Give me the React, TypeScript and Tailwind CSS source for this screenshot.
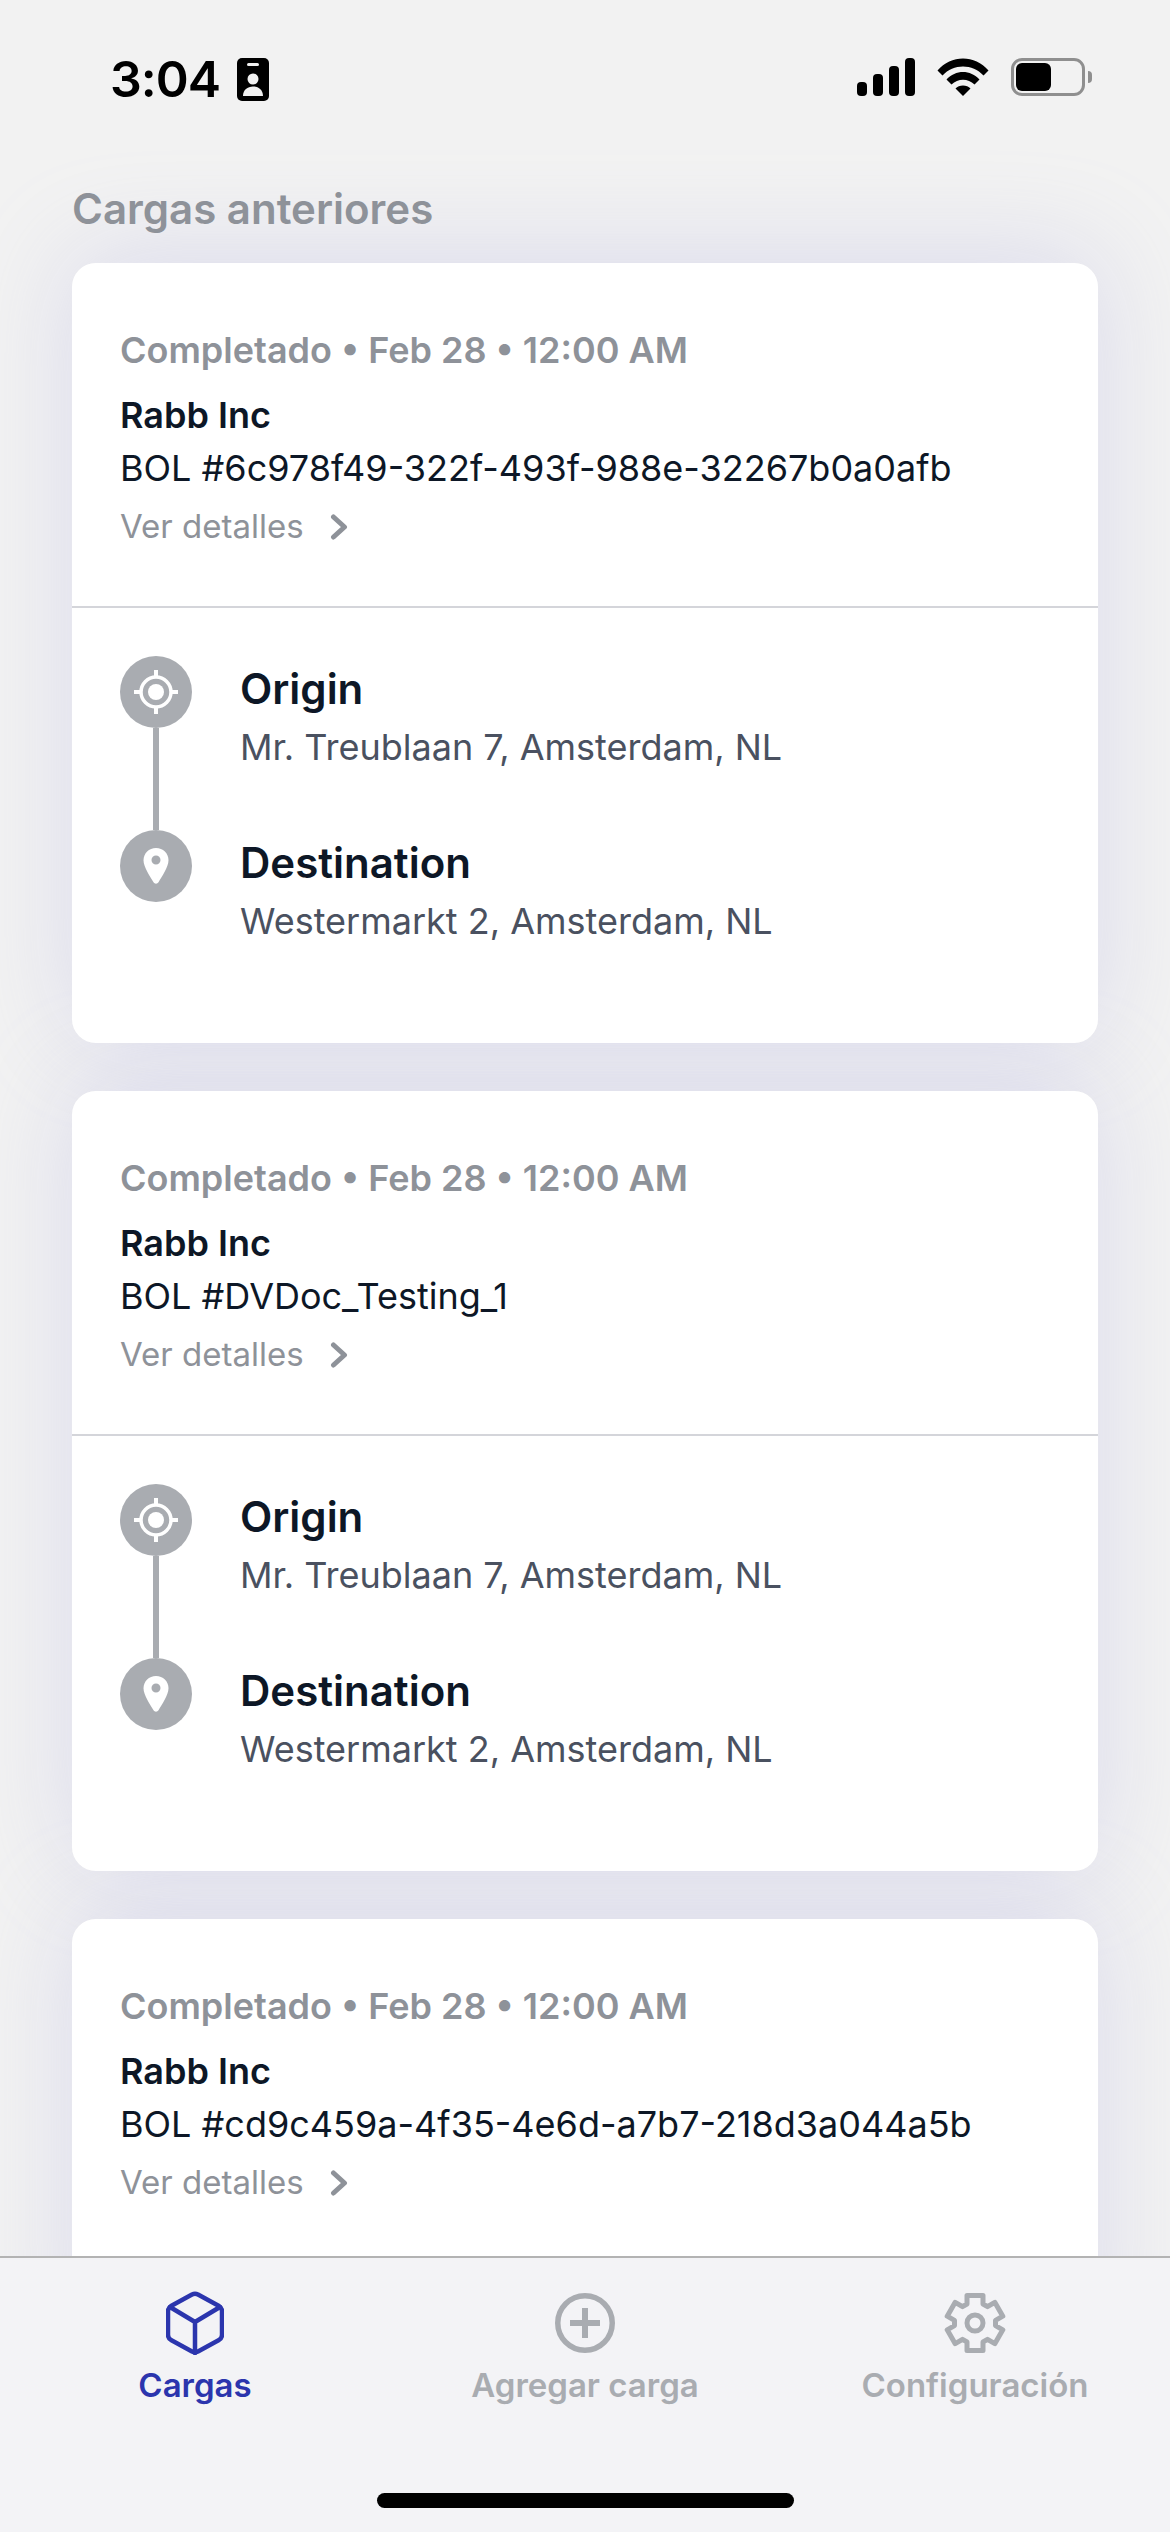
import React from "react";

const loads = [
  { bol: "BOL #6c978f49-322f-493f-988e-32267b0a0afb" },
  { bol: "BOL #DVDoc_Testing_1" },
  // third card runs under the tab bar, only its top part is visible
  { bol: "BOL #cd9c459a-4f35-4e6d-a7b7-218d3a044a5b", cut: true },
];

const TargetIcon = () => (
  <svg viewBox="0 0 72 72" className="w-[72px] h-[72px] shrink-0">
    <circle cx="36" cy="36" r="36" fill="#a9acb1" />
    <circle cx="36" cy="36" r="15" fill="none" stroke="#fff" strokeWidth="3.5" />
    <circle cx="36" cy="36" r="8" fill="#fff" />
    <path d="M36 14v6M36 52v6M14 36h6M52 36h6" stroke="#fff" strokeWidth="4" />
  </svg>
);

const PinIcon = () => (
  <svg viewBox="0 0 72 72" className="w-[72px] h-[72px] shrink-0">
    <circle cx="36" cy="36" r="36" fill="#a9acb1" />
    <path
      fillRule="evenodd"
      d="M36 18c-7 0-12.500 5.400-12.500 12.300 0 6.700 6.800 16.700 10 22 1.100 1.900 3.900 1.900 5 0 3.200-5.300 10-15.300 10-22C48.500 23.400 43 18 36 18Zm0 7.500a4.500 4.500 0 1 1 0 9 4.500 4.500 0 0 1 0-9Z"
      fill="#fff"
    />
  </svg>
);

const LoadCard = ({ bol, cut }: { bol: string; cut?: boolean }) => (
  <section className={`relative bg-white rounded-[24px] shrink-0 ${cut ? "pb-[100px]" : ""}`}>
    {/* shadow sits behind every card so it never falls on the card above */}
    <div className="absolute inset-0 -z-10 rounded-[24px] shadow-[0_-8px_100px_rgba(170,170,225,0.32)]" />
    <div className="pl-[48px] pr-[24px] pt-[64px] h-[345px] border-b-2 border-[#d4d5da]">
      <p className="text-[36px] leading-[46px] font-semibold text-[#8e9299]">Completado • Feb 28 • 12:00 AM</p>
      <p className="mt-[19px] text-[36px] leading-[46px] font-semibold text-[#0d1726]">Rabb Inc</p>
      <p className="mt-[7px] text-[36px] leading-[46px] text-[#0d1726]">{bol}</p>
      <div className="mt-[12px] flex items-center gap-[26px] text-[#8e9299]">
        <span className="text-[33px] leading-[46px]">Ver detalles</span>
        <svg viewBox="0 0 18 26" className="w-[18px] h-[26px] mt-[2px]" fill="none" stroke="currentColor" strokeWidth="5" strokeLinecap="round" strokeLinejoin="round">
          <path d="M3.500 3 14.500 13 3.500 23" />
        </svg>
      </div>
    </div>
    {!cut && (
      <div className="pl-[48px] pt-[48px] h-[435px] flex gap-[48px]">
        <div className="flex flex-col items-center w-[72px]">
          <TargetIcon />
          <div className="w-[6px] h-[102px] bg-[#a9acb1]" />
          <PinIcon />
        </div>
        <div className="flex flex-col pt-[8px]">
          <p className="text-[42px] leading-[50px] font-semibold text-[#0d1726]">Origin</p>
          <p className="mt-[10px] text-[36px] leading-[46px] text-[#4a5160]">Mr. Treublaan 7, Amsterdam, NL</p>
          <p className="mt-[68px] text-[42px] leading-[50px] font-semibold text-[#0d1726]">Destination</p>
          <p className="mt-[10px] text-[36px] leading-[46px] text-[#4a5160]">Westermarkt 2, Amsterdam, NL</p>
        </div>
      </div>
    )}
  </section>
);

const TabItem = ({ label, active, icon }: { label: string; active?: boolean; icon: React.ReactNode }) => (
  <div className="flex flex-col items-center w-[390px]">
    <div className="h-[66px] flex items-center justify-center">{icon}</div>
    <span className={`mt-[8px] text-[33px] leading-[42px] font-semibold ${active ? "text-[#2b35ad]" : "text-[#a9acb1]"}`}>
      {label}
    </span>
  </div>
);

export default function App() {
  return (
    <div className="w-[1170px] h-[2532px] flex flex-col overflow-hidden bg-[#f2f2f2] font-['Inter',sans-serif]">
      {/* status bar */}
      <header className="relative z-10 h-[141px] shrink-0 bg-[#f2f2f2] flex items-start justify-between pt-[55px] pl-[110px] pr-[78px]">
        <div className="flex items-center gap-[17px]">
          <span className="text-[50px] leading-[48px] font-semibold text-black tracking-[-1px]">3:04</span>
          <svg viewBox="0 0 32 43" className="w-[32px] h-[43px]">
            <rect width="32" height="43" rx="5" fill="#000" />
            <rect x="10" y="5" width="12" height="3" rx="1.500" fill="#f2f2f2" />
            <circle cx="16" cy="21" r="5.500" fill="#f2f2f2" />
            <path d="M6 38c0-6 4.500-9.500 10-9.500S26 32 26 38H6Z" fill="#f2f2f2" />
          </svg>
        </div>
        <div className="flex items-center gap-[22px] h-[38px] mt-[3px]">
          <svg viewBox="0 0 58 38" className="w-[58px] h-[38px]">
            <rect x="0" y="24" width="10" height="14" rx="4" fill="#000" />
            <rect x="16" y="16" width="10" height="22" rx="4" fill="#000" />
            <rect x="32" y="8" width="10" height="30" rx="4" fill="#000" />
            <rect x="48" y="0" width="10" height="38" rx="4" fill="#000" />
          </svg>
          <svg viewBox="0 0 52 38" className="w-[52px] h-[38px]">
            <path d="M0.500 12.500C14 -3.500 38 -3.500 51.500 12.500L46.500 17.500C35.500 5.500 16.500 5.500 5.500 17.500Z" fill="#000" />
            <path d="M9.500 21.500C18.500 11.500 33.500 11.500 42.500 21.500L37.500 26.500C31 20 21 20 14.500 26.500Z" fill="#000" />
            <path d="M18.500 30.500C22 26.500 30 26.500 33.500 30.500L26 38Z" fill="#000" />
          </svg>
          <div className="flex items-center gap-[3px]">
            <div className="w-[74px] h-[38px] rounded-[11px] border-[3px] border-[#8f8f8f] p-[2px]">
              <div className="w-[35px] h-full rounded-[6px] bg-black" />
            </div>
            <div className="w-[4px] h-[12px] rounded-r-full bg-[#8f8f8f]" />
          </div>
        </div>
      </header>

      {/* scrolling list */}
      <main className="isolate flex-1 min-h-0 overflow-hidden px-[72px]">
        <h2 className="mt-[43px] text-[42px] leading-[50px] font-semibold text-[#8e9299]">Cargas anteriores</h2>
        <div className="mt-[29px] flex flex-col gap-[48px]">
          {loads.map((l) => (
            <LoadCard key={l.bol} bol={l.bol} cut={l.cut} />
          ))}
        </div>
      </main>

      {/* tab bar */}
      <nav className="relative z-10 h-[276px] shrink-0 bg-[#f3f3f6] border-t-2 border-[#b3b3b3] pt-[32px]">
        <div className="flex">
          <TabItem
            label="Cargas"
            active
            icon={
              <svg viewBox="0 0 58 64" className="w-[58px] h-[64px]" fill="none" stroke="#2b35ad" strokeWidth="4.500" strokeLinejoin="round" strokeLinecap="round">
                <path d="M26 3.500Q29 2 32 3.500L53 15Q56 17 56 20V44Q56 47 53 49L32 60.500Q29 62 26 60.500L5 49Q2 47 2 44V20Q2 17 5 15Z" />
                <path d="M4 16 29 31 54 16M29 31V62" />
              </svg>
            }
          />
          <TabItem
            label="Agregar carga"
            icon={
              <svg viewBox="0 0 60 60" className="w-[60px] h-[60px]" fill="none" stroke="#a9acb1">
                <circle cx="30" cy="30" r="27.250" strokeWidth="5.500" />
                <path d="M30 15v30M15 30h30" strokeWidth="6" />
              </svg>
            }
          />
          <TabItem
            label="Configuración"
            icon={
              <svg viewBox="0 0 60 60" className="w-[60px] h-[60px] overflow-visible" fill="none" stroke="#a9acb1" strokeWidth="5" strokeLinejoin="round">
                <path d="M22 2.500H38V11L42.500 13.600 49.800 9.300 57.800 23.200 50.500 27.400V32.600L57.800 36.800 49.800 50.700 42.500 46.400 38 49V57.500H22V49L17.500 46.400 10.200 50.700 2.200 36.800 9.500 32.600V27.400L2.200 23.200 10.200 9.300 17.500 13.600 22 11Z" />
                <circle cx="30" cy="30" r="8" />
              </svg>
            }
          />
        </div>
        <div className="mx-auto mt-[87px] w-[417px] h-[15px] rounded-full bg-black" />
      </nav>
    </div>
  );
}
